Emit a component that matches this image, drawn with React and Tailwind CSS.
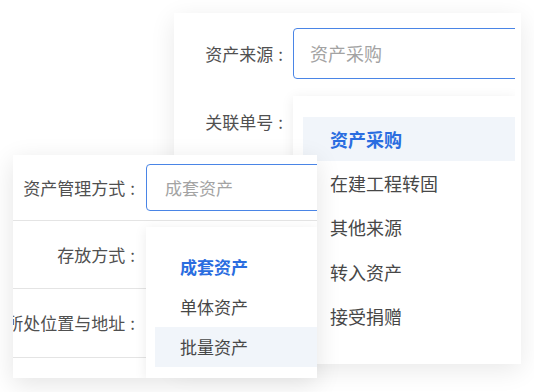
const backItems = ['资产采购', '在建工程转固', '其他来源', '转入资产', '接受捐赠']
const frontItems = ['成套资产', '单体资产', '批量资产']

function Label({ text, width, pr }) {
  return (
    <div className={`flex shrink-0 justify-end whitespace-nowrap ${width} ${pr}`}>
      <span>{text}</span>
      <span className="ml-[5px]">:</span>
    </div>
  )
}

function BackCard() {
  return (
    <div className="absolute left-[174px] top-[13px] h-[351px] w-[347px] bg-white pr-[6px] shadow-[0_6px_24px_rgba(0,0,0,0.09)]">
      <div className="relative h-full overflow-hidden text-[17px] text-[#505050]">
        <div className="flex items-center pt-[15px]">
          <Label text="资产来源" width="w-[119px]" pr="pr-[10px]" />
          <div className="flex h-[51px] w-[240px] shrink-0 items-center rounded-l-[4px] border border-[#4a85e6] pl-[16px] text-[18px] text-[#a3a3a3]">
            资产采购
          </div>
        </div>
        <div className="flex h-[86px] items-center">
          <Label text="关联单号" width="w-[119px]" pr="pr-[10px]" />
        </div>
        <div className="absolute bottom-0 left-[119px] right-0 top-[83px] bg-white pl-[10px] pt-[21px] shadow-[0_2px_12px_rgba(0,0,0,0.08)]">
          {backItems.map((t, i) => (
            <div
              key={t}
              className={`flex h-[44.3px] items-center pl-[27px] text-[18px] ${
                i === 0 ? 'bg-[#f1f5fa] font-semibold text-[#2a6de0]' : 'text-[#474747]'
              }`}
            >
              {t}
            </div>
          ))}
        </div>
      </div>
    </div>
  )
}

function FrontCard() {
  return (
    <div className="absolute left-[13px] top-[155px] h-[223px] w-[304px] overflow-hidden bg-white text-[17px] text-[#505050] shadow-[0_6px_24px_rgba(0,0,0,0.11)]">
      <div className="flex h-[66px] items-center border-b border-[#e4e4e4]">
        <Label text="资产管理方式" width="w-[133px]" pr="pr-[11px]" />
        <div className="flex h-[47px] w-[200px] shrink-0 items-center rounded-l-[4px] border border-[#4a85e6] pl-[18px] text-[#a3a3a3]">
          成套资产
        </div>
      </div>
      <div className="flex h-[68px] items-center border-b border-[#e4e4e4]">
        <Label text="存放方式" width="w-[133px]" pr="pr-[11px]" />
      </div>
      <div className="flex h-[69px] items-center border-b border-[#e4e4e4]">
        <Label text="所处位置与地址" width="w-[133px]" pr="pr-[11px]" />
      </div>
      <div className="absolute bottom-0 left-[133px] right-0 top-[72px] bg-white pl-[9px] pt-[20px] shadow-[0_2px_12px_rgba(0,0,0,0.08)]">
        {frontItems.map((t, i) => (
          <div
            key={t}
            className={`flex h-[40px] items-center pl-[25px] ${
              i === 0 ? 'font-semibold text-[#2a6de0]' : 'text-[#474747]'
            } ${i === 2 ? 'bg-[#f1f5fa]' : ''}`}
          >
            {t}
          </div>
        ))}
      </div>
    </div>
  )
}

export default function App() {
  return (
    <div className="relative h-[392px] w-[534px] overflow-hidden bg-white font-['Noto_Sans_CJK_SC',sans-serif]">
      <BackCard />
      <FrontCard />
    </div>
  )
}
